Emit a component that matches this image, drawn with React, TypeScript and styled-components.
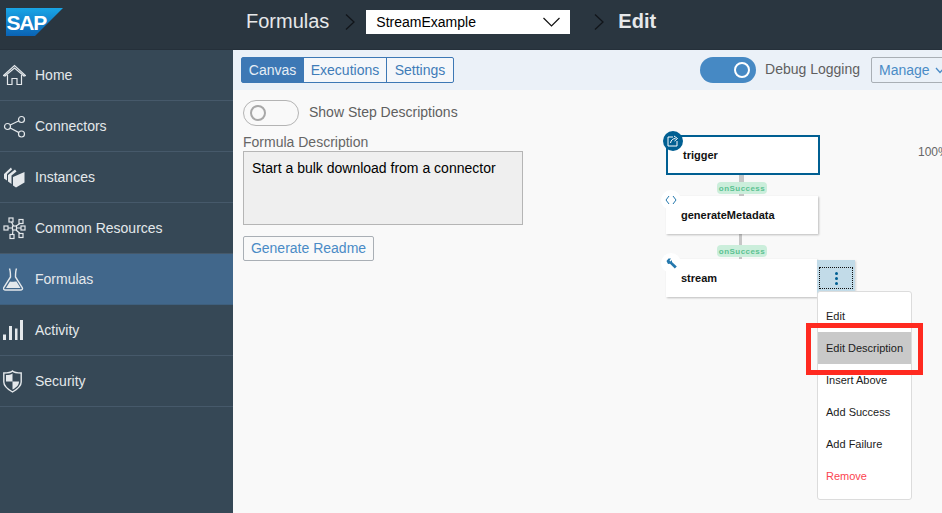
import React, {FunctionComponent} from 'react';
import styled, {createGlobalStyle} from 'styled-components';

const GlobalStyle = createGlobalStyle`
  html, body {
    margin: 0;
    padding: 0;
    height: 100%;
    overflow: hidden;
    font-family: "Liberation Sans", Arial, sans-serif;
  }
  * {
    box-sizing: border-box;
  }
`

/* ====== Containers ====== */

const Page = styled.div`
  width: 942px;
  height: 513px;
  display: flex;
  flex-direction: column;
  overflow: hidden;
`

const Header = styled.header`
  height: 50px;
  flex: none;
  display: flex;
  align-items: center;
  padding-bottom: 6px;
  background-color: #2a3640;
  border-bottom: 1px solid #25303a;
`

const LogoBox = styled.div`
  width: 246px;
  flex: none;
  padding-left: 6px;
  display: flex;
`

const Body = styled.div`
  flex: 1;
  display: flex;
  min-height: 0;
`

const Sidebar = styled.nav`
  width: 233px;
  flex: none;
  background-color: #364856;
`

const Main = styled.main`
  flex: 1;
  min-width: 0;
  display: flex;
  flex-direction: column;
  background-color: #f9f9f9;
`

const Toolbar = styled.div`
  height: 40px;
  flex: none;
  display: flex;
  align-items: center;
  justify-content: space-between;
  padding: 0 0 0 8px;
  background-color: #ebf1f8;
  overflow: hidden;
`

const ToolbarRight = styled.div`
  display: flex;
  align-items: center;
  gap: 9px;
  margin-right: -12px;
`

const Content = styled.div`
  flex: 1;
  display: flex;
  min-height: 0;
`

const LeftPanel = styled.div`
  width: 300px;
  flex: none;
  padding: 10px 0 0 10px;
`

const Canvas = styled.div`
  flex: 1;
  position: relative;
  overflow: hidden;
`

const ToggleRow = styled.div`
  display: flex;
  align-items: center;
  gap: 10px;
  height: 26px;
`

/* ====== UI Elements ====== */

const NavItem = styled.a<{$active?: boolean}>`
  height: 51px;
  display: flex;
  align-items: center;
  gap: 9px;
  padding-left: 3px;
  color: #e4e8eb;
  font-size: 14px;
  background-color: ${p => (p.$active ? '#41678b' : 'transparent')};
  border-bottom: 1px solid ${p => (p.$active ? '#3e5f7d' : '#46596a')};
`

const IconBox = styled.svg`
  width: 23px;
  height: 23px;
  flex: none;
  fill: none;
  stroke: #e4e8eb;
  stroke-width: 1.2;
`

const FilledIconBox = styled(IconBox)`
  fill: #e4e8eb;
  stroke: none;
`

const Chevron = styled.svg`
  width: 10px;
  height: 18px;
  flex: none;
  fill: none;
  stroke: #11151a;
  stroke-width: 1.3;
`

const Select = styled.div`
  width: 204px;
  height: 24px;
  margin: 0 24px 0 11px;
  padding: 0 10px;
  display: flex;
  align-items: center;
  justify-content: space-between;
  background-color: #fff;
  color: #000;
  font-size: 14px;
`

const Tabs = styled.div`
  display: flex;
  height: 26px;
  border: 1px solid #3d78b5;
  border-radius: 2px;
  background-color: #f5f7fa;
`

const Tab = styled.div<{$active?: boolean; $width: number}>`
  width: ${p => p.$width}px;
  display: flex;
  align-items: center;
  justify-content: center;
  font-size: 14px;
  color: ${p => (p.$active ? '#e6eef6' : '#3f7cb8')};
  background-color: ${p => (p.$active ? '#3d78b5' : 'transparent')};
  & + & {
    border-left: 1px solid #3d78b5;
  }
`

const Toggle = styled.div<{$on?: boolean}>`
  width: 56px;
  height: 26px;
  flex: none;
  border-radius: 13px;
  display: flex;
  align-items: center;
  padding: 0 6px;
  justify-content: ${p => (p.$on ? 'flex-end' : 'flex-start')};
  background-color: ${p => (p.$on ? '#4689c4' : 'transparent')};
  border: ${p => (p.$on ? 'none' : '1px solid #b4b4b4')};
`

const Knob = styled.span<{$on?: boolean}>`
  width: 16px;
  height: 16px;
  border-radius: 50%;
  border: 2px solid ${p => (p.$on ? '#fff' : '#a8a8a8')};
`

const ManageButton = styled.div`
  width: 83px;
  height: 26px;
  margin-left: 2px;
  padding-left: 7px;
  display: flex;
  align-items: center;
  gap: 5px;
  flex: none;
  color: #4a8bc6;
  font-size: 14px;
  border: 1px solid #a9afb5;
  border-radius: 2px;
`

const DescriptionBox = styled.div`
  width: 280px;
  height: 74px;
  padding: 8px 8px;
  color: #000;
  font-size: 14px;
  line-height: 16px;
  background-color: #efefef;
  border: 1px solid #b5b5b5;
`

const ReadmeButton = styled.div`
  width: 131px;
  height: 25px;
  margin-top: 11px;
  padding-bottom: 1px;
  display: flex;
  align-items: center;
  justify-content: center;
  color: #4a8bc6;
  font-size: 14px;
  border: 1px solid #a9afb5;
  border-radius: 2px;
`

/* the flow chart is a free canvas, so its parts sit at their own coordinates */

const Node = styled.div<{$left: number; $top: number; $width: number; $height: number; $selected?: boolean}>`
  position: absolute;
  left: ${p => p.$left}px;
  top: ${p => p.$top}px;
  width: ${p => p.$width}px;
  height: ${p => p.$height}px;
  padding-left: 15px;
  display: flex;
  align-items: center;
  color: #111;
  font-size: 11px;
  font-weight: bold;
  background-color: #fff;
  border: ${p => (p.$selected ? '2px solid #005f92' : 'none')};
  box-shadow: ${p => (p.$selected ? 'none' : '1px 1px 2px rgba(0, 0, 0, 0.25)')};
`

const NodeBadge = styled.span<{$selected?: boolean}>`
  position: absolute;
  left: -5px;
  top: -6px;
  width: 20px;
  height: 20px;
  border-radius: 50%;
  display: flex;
  align-items: center;
  justify-content: center;
  background-color: ${p => (p.$selected ? '#005f92' : '#fff')};
  color: ${p => (p.$selected ? '#fff' : '#2478ad')};
`

const Connector = styled.div<{$left: number; $top: number; $height: number; $width: number}>`
  position: absolute;
  left: ${p => p.$left}px;
  top: ${p => p.$top}px;
  width: ${p => p.$width}px;
  height: ${p => p.$height}px;
  background-color: #c6c6c6;
`

const Pill = styled.div<{$top: number}>`
  position: absolute;
  left: 184px;
  top: ${p => p.$top}px;
  width: 50px;
  height: 12px;
  border-radius: 4px;
  display: flex;
  align-items: center;
  justify-content: center;
  color: #5cc292;
  font-size: 8px;
  font-weight: bold;
  letter-spacing: 0.45px;
  background-color: #cbeedb;
`

const Kebab = styled.div`
  position: absolute;
  left: 284px;
  top: 170px;
  width: 38px;
  height: 37px;
  padding: 7px 2px 8px;
  background-color: #c2dbe8;
  box-shadow: 1px 1px 2px rgba(0, 0, 0, 0.15);
`

const KebabInner = styled.div`
  height: 100%;
  display: flex;
  flex-direction: column;
  align-items: center;
  justify-content: center;
  gap: 2px;
  border: 1px dotted #111;
`

const Dot = styled.span`
  width: 3px;
  height: 3px;
  border-radius: 50%;
  background-color: #005f92;
`

const Menu = styled.div`
  position: absolute;
  left: 284px;
  top: 201px;
  width: 95px;
  height: 209px;
  padding-top: 8px;
  background-color: #fff;
  border: 1px solid #dcdcdc;
  border-radius: 3px;
`

const MenuItem = styled.div<{$active?: boolean; $danger?: boolean}>`
  height: 32px;
  padding-left: 8px;
  display: flex;
  align-items: center;
  font-size: 11px;
  color: ${p => (p.$danger ? '#fb4450' : '#1c1c1c')};
  background-color: ${p => (p.$active ? '#c9c9c9' : 'transparent')};
`

const Highlight = styled.div`
  position: absolute;
  left: 273px;
  top: 233px;
  width: 117px;
  height: 52px;
  border: 5px solid #ff2a20;
  pointer-events: none;
`

/* ====== Text Elements ====== */

const Crumb = styled.span`
  color: #e6e8ea;
  font-size: 20px;
  margin-right: 16px;
`

const CrumbStrong = styled(Crumb)`
  font-weight: bold;
  margin: 0 0 0 14px;
`

const ToggleLabel = styled.span`
  padding-bottom: 2px;
  color: #5f5f5f;
  font-size: 14px;
`

const FieldLabel = styled.div`
  margin-top: 8px;
  color: #666;
  font-size: 14px;
  line-height: 17px;
`

const ZoomLabel = styled.span`
  position: absolute;
  left: 385px;
  top: 55px;
  color: #666;
  font-size: 12px;
  white-space: nowrap;
`

/* ====== Icons ====== */

const SapLogo = () => (
  <svg width="58" height="28" viewBox="0 0 58 28">
    <defs>
      <linearGradient id="sapBlue" x1="0" y1="0" x2="0" y2="1">
        <stop offset="0" stopColor="#19a5e6" />
        <stop offset="1" stopColor="#0a63b5" />
      </linearGradient>
    </defs>
    <polygon points="0,0 57,0 29,28 0,28" fill="url(#sapBlue)" />
    <text x="0.5" y="21.5" fill="#fff" fontFamily="Liberation Sans" fontWeight="bold" fontSize="21" letterSpacing="-1.2">SAP</text>
  </svg>
)

const ChevronRight = () => (
  <Chevron viewBox="0 0 10 18"><path d="M1 1.5 L9 9 L1 16.5" /></Chevron>
)

const HomeIcon = () => (
  <IconBox viewBox="0 0 23 23">
    <path d="M0.5 11.5 L11.5 1.5 L22.5 11.5 L21 12 L11.5 4 L2 12 Z" />
    <path d="M4.5 11 V20.5 H9 V14.5 H14 V20.5 H18.5 V11" />
  </IconBox>
)

const ConnectorsIcon = () => (
  <IconBox viewBox="0 0 23 23">
    <circle cx="4.5" cy="11.5" r="3" />
    <circle cx="18.5" cy="4.5" r="3" />
    <circle cx="18.5" cy="19" r="3" />
    <path d="M7.2 10 L16 5.8 M7.2 13 L16 17.6" />
  </IconBox>
)

const InstancesIcon = () => (
  <FilledIconBox viewBox="0 0 23 23">
    <path d="M1 8 L8 1.5 L9 3.5 L4 8 V14.5 L1 12.5 Z" />
    <path d="M5 9 L12 3.5 L13.5 5.5 L8.5 9.5 V18 L5 15.5 Z" />
    <path d="M10 11 L21.5 6 V16.5 L13 21.5 L10 19.5 Z" />
  </FilledIconBox>
)

const ResourcesIcon = () => (
  <IconBox viewBox="0 0 23 23">
    <rect x="6" y="1" width="4" height="4" />
    <rect x="16" y="2.5" width="4" height="4" />
    <rect x="1" y="9" width="4" height="4" />
    <rect x="9.5" y="9" width="4" height="4" />
    <rect x="18" y="9" width="4" height="4" />
    <rect x="7" y="17.5" width="4" height="4" />
    <rect x="16" y="16.5" width="4" height="4" />
    <path d="M5 11 H9.5 M13.5 11 H18 M8.5 5 L10.5 9 M17 6.5 L13 9 M10 13 L9.5 17.5 M13 13 L17 16.5" />
  </IconBox>
)

const FlaskIcon = () => (
  <IconBox viewBox="0 0 23 23">
    <path d="M6.5 0.5 C7.5 3 7.5 4 7.5 9 L0.8 19.5 C0 21 1 22 2.5 22 H17.5 C19 22 20 21 19.2 19.5 L12.5 9 C12.5 4 12.5 3 13.5 0.5" strokeWidth="1.4" />
    <path d="M3 20 L7 13.5 C9.5 14.5 11 13 13.5 13.5 L17.5 20 Z" fill="#e4e8eb" stroke="none" />
  </IconBox>
)

const ActivityIcon = () => (
  <FilledIconBox viewBox="0 0 23 23">
    <rect x="0" y="15.5" width="3" height="5.5" />
    <rect x="6" y="7" width="3" height="14" />
    <rect x="12" y="9.5" width="2.5" height="11.5" />
    <rect x="17" y="1" width="3" height="20" />
  </FilledIconBox>
)

const ShieldIcon = () => (
  <IconBox viewBox="0 0 23 23">
    <path d="M0.8 3 C5 3 8 2.5 9.5 1 C11 2.5 14 3 18.2 3 V12 C18.2 17 13 20 9.5 22 C6 20 0.8 17 0.8 12 Z" strokeWidth="1.4" />
    <path d="M3 5 C6 5 8 4.5 9.5 3.5 V11.5 H3 Z M9.5 11.5 H16 C16 15.5 12.5 18 9.5 19.5 Z" fill="#e4e8eb" stroke="none" />
  </IconBox>
)

const TriggerGlyph = () => (
  <svg width="12" height="12" viewBox="0 0 12 12" fill="none" stroke="currentColor" strokeWidth="1">
    <path d="M6 2 H1 V11 H10 V6" />
    <path d="M3.5 8 C4 5 6 3.5 8.5 3.5 M7 1 L10.5 3.5 L7.5 6" />
  </svg>
)

const CodeGlyph = () => (
  <svg width="12" height="10" viewBox="0 0 12 10" fill="none" stroke="currentColor" strokeWidth="1">
    <path d="M4 1 L1 5 L4 9 M8 1 L11 5 L8 9" />
  </svg>
)

const WrenchGlyph = () => (
  <svg width="11" height="11" viewBox="0 0 11 11" fill="currentColor">
    <path d="M0.5 3 L2.5 0.5 L5 0.5 L3.5 2.5 L4.5 3.5 L6 2 L6 4 L10.8 8.5 L8.8 10.5 L4 5.8 L2 6 Z" />
  </svg>
)

const SelectArrow = () => (
  <svg width="17" height="10" viewBox="0 0 17 10" fill="none" stroke="#111" strokeWidth="1.2">
    <path d="M0.5 1 L8.5 9 L16.5 1" />
  </svg>
)

const ManageArrow = () => (
  <svg width="10" height="7" viewBox="0 0 10 7" fill="none" stroke="#4a8bc6" strokeWidth="1.3">
    <path d="M1 1 L5 5.5 L9 1" />
  </svg>
)

/* ====== Components ====== */

const navItems = [
  {label: 'Home', icon: <HomeIcon />},
  {label: 'Connectors', icon: <ConnectorsIcon />},
  {label: 'Instances', icon: <InstancesIcon />},
  {label: 'Common Resources', icon: <ResourcesIcon />},
  {label: 'Formulas', icon: <FlaskIcon />, active: true},
  {label: 'Activity', icon: <ActivityIcon />},
  {label: 'Security', icon: <ShieldIcon />},
];

const menuItems = ['Edit', 'Edit Description', 'Insert Above', 'Add Success', 'Add Failure', 'Remove'];

const App: FunctionComponent = () => {
  return (
    <Page>
      <GlobalStyle />
      <Header>
        <LogoBox><SapLogo /></LogoBox>
        <Crumb>Formulas</Crumb>
        <ChevronRight />
        <Select>
          StreamExample
          <SelectArrow />
        </Select>
        <ChevronRight />
        <CrumbStrong>Edit</CrumbStrong>
      </Header>
      <Body>
        <Sidebar>
          {navItems.map(item => (
            <NavItem key={item.label} $active={item.active}>
              {item.icon}
              {item.label}
            </NavItem>
          ))}
        </Sidebar>
        <Main>
          <Toolbar>
            <Tabs>
              <Tab $active $width={61}>Canvas</Tab>
              <Tab $width={83}>Executions</Tab>
              <Tab $width={67}>Settings</Tab>
            </Tabs>
            <ToolbarRight>
              <Toggle $on><Knob $on /></Toggle>
              <ToggleLabel>Debug Logging</ToggleLabel>
              <ManageButton>Manage<ManageArrow /></ManageButton>
            </ToolbarRight>
          </Toolbar>
          <Content>
            <LeftPanel>
              <ToggleRow>
                <Toggle><Knob /></Toggle>
                <ToggleLabel>Show Step Descriptions</ToggleLabel>
              </ToggleRow>
              <FieldLabel>Formula Description</FieldLabel>
              <DescriptionBox>Start a bulk download from a connector</DescriptionBox>
              <ReadmeButton>Generate Readme</ReadmeButton>
            </LeftPanel>
            <Canvas>
              <ZoomLabel>100%</ZoomLabel>
              <Connector $left={206} $top={85} $width={5} $height={21} />
              <Connector $left={206} $top={144} $width={3} $height={25} />
              <Pill $top={92}>onSuccess</Pill>
              <Pill $top={155}>onSuccess</Pill>
              <Node $selected $left={133} $top={45} $width={154} $height={40}>
                <NodeBadge $selected><TriggerGlyph /></NodeBadge>
                trigger
              </Node>
              <Node $left={133} $top={106} $width={152} $height={38}>
                <NodeBadge><CodeGlyph /></NodeBadge>
                generateMetadata
              </Node>
              <Node $left={133} $top={169} $width={151} $height={38}>
                <NodeBadge><WrenchGlyph /></NodeBadge>
                stream
              </Node>
              <Kebab>
                <KebabInner><Dot /><Dot /><Dot /></KebabInner>
              </Kebab>
              <Menu>
                {menuItems.map(item => (
                  <MenuItem key={item} $active={item === 'Edit Description'} $danger={item === 'Remove'}>
                    {item}
                  </MenuItem>
                ))}
              </Menu>
              <Highlight />
            </Canvas>
          </Content>
        </Main>
      </Body>
    </Page>
  )
}

export default App;
